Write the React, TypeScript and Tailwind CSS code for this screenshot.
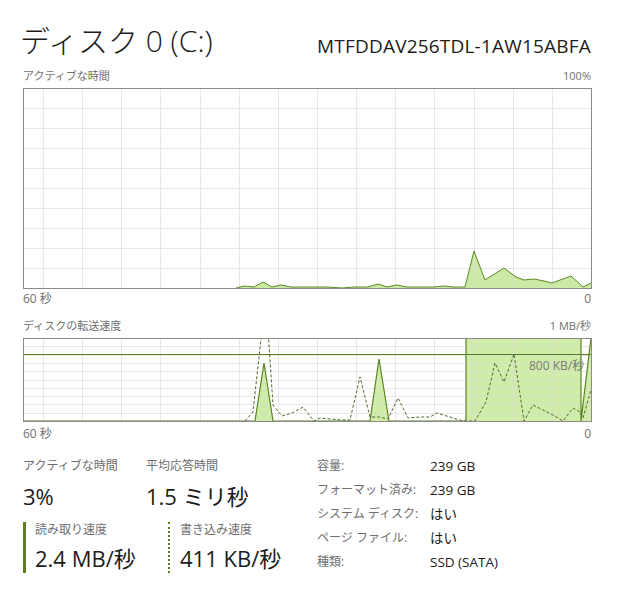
import React from "react";

const W = 568;
const gridX = Array.from({ length: 14 }, (_, i) => 20 + i * 39.14);

const activePts: [number, number][] = [
  [213, 200], [221, 198], [231, 199], [240, 194], [249, 199], [258, 197], [268, 199],
  [280, 199], [292, 199], [304, 199], [319, 200], [331, 199], [345, 199], [355, 196],
  [364, 199], [374, 197], [384, 199], [398, 199], [410, 199], [422, 198], [430, 199],
  [442, 199], [451, 163], [462, 192], [481, 180], [493, 189], [501, 192], [511, 191],
  [521, 193], [529, 195], [548, 188], [560, 199], [568, 195],
];

const readPts: [number, number][] = [
  [0, 83], [232, 83], [241, 25], [250, 83], [347, 83], [356, 21], [366, 83],
  [443, 83], [443, 0], [558, 0], [558, 83], [568, 0],
];

const writePts: [number, number][] = [
  [222, 83], [230, 74], [239, -8], [245, -8], [250, 67], [259, 78], [269, 75], [280, 69],
  [291, 83], [297, 80], [307, 81], [319, 82], [327, 82], [337, 39], [347, 79], [356, 79],
  [365, 81], [375, 60], [385, 80], [397, 79], [407, 79], [414, 75], [430, 80], [440, 83],
  [452, 83], [463, 64], [472, 25], [481, 44], [491, 16], [501, 83], [510, 67], [530, 77],
  [540, 83], [550, 70], [557, 74], [560, 80], [568, 52],
];

const toStr = (pts: [number, number][]) => pts.map(([x, y]) => `${x},${y}`).join(" ");

function Grid({ h, rows }: { h: number; rows: number[] }) {
  return (
    <g stroke="#d9d9d9" strokeOpacity="0.6" strokeWidth="1">
      {gridX.map((x) => (
        <line key={"v" + x} x1={Math.round(x) + 0.5} y1={0} x2={Math.round(x) + 0.5} y2={h} />
      ))}
      {rows.map((y) => (
        <line key={"h" + y} x1={0} y1={Math.round(y) + 0.5} x2={W} y2={Math.round(y) + 0.5} />
      ))}
    </g>
  );
}

function ActiveChart() {
  const h = 200;
  return (
    <svg width={W + 1} height={h + 1} className="block">
      <polygon points={toStr([...activePts, [568, 200], [213, 200]])} fill="#cde9a6" />
      <Grid h={h} rows={[20, 40, 60, 80, 100, 120, 140, 160, 180]} />
      <polyline points={toStr(activePts)} fill="none" stroke="#5b8a22" strokeWidth="1" />
      <rect x="0.5" y="0.5" width={W} height={h} fill="none" stroke="#8a8a8a" />
    </svg>
  );
}

function TransferChart() {
  const h = 83;
  const rows = Array.from({ length: 9 }, (_, i) => (i + 1) * 8.3);
  return (
    <div className="relative">
      <svg width={W + 1} height={h + 1} className="block">
        <defs>
          <clipPath id="c2">
            <rect x="0" y="0" width={W + 1} height={h + 1} />
          </clipPath>
        </defs>
        <g clipPath="url(#c2)">
          <polygon points={toStr([...readPts, [568, 83]])} fill="#cfeca8" />
          <Grid h={h} rows={rows} />
          <line x1="0" y1="16.5" x2={W} y2="16.5" stroke="#5a7f1e" strokeWidth="1.2" />
          <polyline points={toStr(readPts)} fill="none" stroke="#5a8420" strokeWidth="1.2" />
          <polyline
            points={toStr(writePts)}
            fill="none"
            stroke="#4f6a2c"
            strokeWidth="1"
            strokeDasharray="3 2"
          />
        </g>
        <rect x="0.5" y="0.5" width={W} height={h} fill="none" stroke="#8a8a8a" />
      </svg>
      <span className="absolute left-[506px] top-[21px] text-[12px] leading-[14px] text-[#7a7a7a]">
        800 KB/秒
      </span>
    </div>
  );
}

function Detail({ label, value }: { label: string; value: string }) {
  return (
    <div className="flex h-[24px] items-center">
      <div className="w-[113px] text-[12px] text-[#6e6e6e]">{label}</div>
      <div className="text-[13.5px] text-[#1c1c1c]">{value}</div>
    </div>
  );
}

export default function App() {
  return (
    <div className="w-[618px] h-[595px] bg-white pl-[23px] pr-[27px] font-['Open_Sans','Noto_Sans_CJK_JP',sans-serif] text-[#1c1c1c] overflow-hidden">
      <div className="h-[67px] pt-[25px] flex items-start justify-between">
        <div className="-ml-[3px] text-[30px] leading-[31px] font-light">ディスク 0 (C:)</div>
        <div className="mt-[10px] text-[19px] leading-[22px] tracking-[0.2px]">MTFDDAV256TDL-1AW15ABFA</div>
      </div>

      <div className="h-[18px] flex items-center justify-between text-[11px] text-[#707070]">
        <span>アクティブな時間</span>
        <span>100%</span>
      </div>
      <div className="mt-[3px]">
        <ActiveChart />
      </div>
      <div className="h-[20px] flex items-center justify-between text-[12px] text-[#707070]">
        <span>60 秒</span>
        <span>0</span>
      </div>

      <div className="mt-[8px] h-[18px] flex items-center justify-between text-[11px] text-[#707070]">
        <span>ディスクの転送速度</span>
        <span>1 MB/秒</span>
      </div>
      <div className="mt-[3px]">
        <TransferChart />
      </div>
      <div className="h-[24px] flex items-center justify-between text-[12px] text-[#707070]">
        <span>60 秒</span>
        <span>0</span>
      </div>

      <div className="flex">
        <div className="w-[294px] pt-[10px]">
          <div className="flex">
            <div className="w-[123px]">
              <div className="h-[20px] flex items-center text-[12px] text-[#6e6e6e]">アクティブな時間</div>
              <div className="mt-[6px] text-[22px] leading-[28px]">3%</div>
            </div>
            <div>
              <div className="h-[20px] flex items-center text-[12px] text-[#6e6e6e]">平均応答時間</div>
              <div className="mt-[6px] text-[22px] leading-[28px]">1.5 ミリ秒</div>
            </div>
          </div>
          <div className="mt-[12px] flex">
            <div className="w-[145px] border-l-[3px] border-[#5b7f22] pl-[9px] pb-[1px]">
              <div className="h-[16px] flex items-center text-[12px] text-[#6e6e6e]">読み取り速度</div>
              <div className="mt-[6px] text-[22px] leading-[28px]">2.4 MB/秒</div>
            </div>
            <div className="border-l-2 border-dotted border-[#5b7f22] pl-[10px] pb-[1px]">
              <div className="h-[16px] flex items-center text-[12px] text-[#6e6e6e]">書き込み速度</div>
              <div className="mt-[6px] text-[22px] leading-[28px]">411 KB/秒</div>
            </div>
          </div>
        </div>
        <div className="pt-[8px]">
          <Detail label="容量:" value="239 GB" />
          <Detail label="フォーマット済み:" value="239 GB" />
          <Detail label="システム ディスク:" value="はい" />
          <Detail label="ページ ファイル:" value="はい" />
          <Detail label="種類:" value="SSD (SATA)" />
        </div>
      </div>
    </div>
  );
}
